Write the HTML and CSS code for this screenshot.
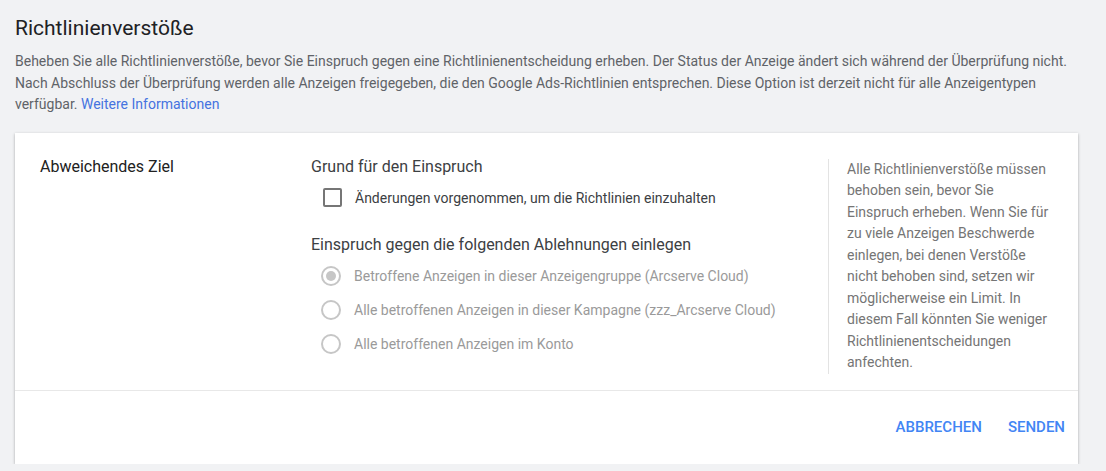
FILE: index.html
```html
<!DOCTYPE html>
<html lang="de">
<head>
<meta charset="utf-8">
<title>Richtlinienverstöße</title>
<link rel="stylesheet" href="styles.css">
</head>
<body>
<div class="page">
  <h1 class="title">Richtlinienverstöße</h1>
  <p class="intro">Beheben Sie alle Richtlinienverstöße, bevor Sie Einspruch gegen eine Richtlinienentscheidung erheben. Der Status der Anzeige ändert sich während der Überprüfung nicht. Nach Abschluss der Überprüfung werden alle Anzeigen freigegeben, die den Google Ads-Richtlinien entsprechen. Diese Option ist derzeit nicht für alle Anzeigentypen verfügbar. <a class="link" href="#">Weitere Informationen</a></p>

  <div class="card">
    <div class="card-body">
      <div class="col-label">Abweichendes Ziel</div>
      <div class="col-main">
        <div class="heading">Grund für den Einspruch</div>
        <label class="check-row">
          <span class="checkbox"></span>
          <span class="check-text">Änderungen vorgenommen, um die Richtlinien einzuhalten</span>
        </label>
        <div class="heading heading-2">Einspruch gegen die folgenden Ablehnungen einlegen</div>
        <div class="radio-row">
          <span class="radio checked"></span>
          <span class="radio-text">Betroffene Anzeigen in dieser Anzeigengruppe (Arcserve Cloud)</span>
        </div>
        <div class="radio-row">
          <span class="radio"></span>
          <span class="radio-text">Alle betroffenen Anzeigen in dieser Kampagne (zzz_Arcserve Cloud)</span>
        </div>
        <div class="radio-row">
          <span class="radio"></span>
          <span class="radio-text">Alle betroffenen Anzeigen im Konto</span>
        </div>
      </div>
      <div class="col-help">Alle Richtlinienverstöße müssen behoben sein, bevor Sie Einspruch erheben. Wenn Sie für zu viele Anzeigen Beschwerde einlegen, bei denen Verstöße nicht behoben sind, setzen wir möglicherweise ein Limit. In diesem Fall könnten Sie weniger Richtlinienentscheidungen anfechten.</div>
    </div>
    <div class="card-footer">
      <button class="btn">ABBRECHEN</button>
      <button class="btn">SENDEN</button>
    </div>
  </div>
</div>
</body>
</html>
```

FILE: styles.css
```css
html, body {
  margin: 0;
  padding: 0;
  background: #f1f2f4;
  font-family: Roboto, "Liberation Sans", Arial, sans-serif;
}

.page {
  padding: 14px 28px 0 15px;
}

.title {
  margin: 0 0 9px 0;
  font-size: 21px;
  line-height: 28px;
  font-weight: 400;
  color: #202124;
}

.intro {
  margin: 0 0 17px 0;
  font-size: 14px;
  line-height: 21.5px;
  color: #5f6368;
}

.link {
  color: #4573e0;
  text-decoration: none;
}

.card {
  background: #fff;
  box-shadow: 0 1px 3px rgba(0, 0, 0, 0.25), 0 1px 1px rgba(0, 0, 0, 0.12);
}

.card-body {
  display: flex;
  align-items: flex-start;
  padding: 20px 27px 16px 25px;
}

.col-label {
  width: 271px;
  flex: none;
  font-size: 16px;
  line-height: 28px;
  color: #212121;
}

.col-main {
  flex: 1;
}

.heading {
  font-size: 16px;
  line-height: 28px;
  color: #3c4043;
}

.heading-2 {
  margin-top: 16px;
}

.check-row {
  display: flex;
  align-items: center;
  height: 34px;
  padding-left: 12px;
}

.checkbox {
  width: 15px;
  height: 15px;
  border: 2px solid #767676;
  border-radius: 2px;
  flex: none;
  margin-right: 13px;
}

.check-text {
  font-size: 14px;
  color: #3c4043;
}

.radio-row {
  display: flex;
  align-items: center;
  height: 34px;
  padding-left: 10px;
}

.radio {
  position: relative;
  width: 16px;
  height: 16px;
  border: 2px solid #c6c6c6;
  border-radius: 50%;
  flex: none;
  margin-right: 13px;
}

.radio.checked::after {
  content: "";
  position: absolute;
  left: 3px;
  top: 3px;
  width: 10px;
  height: 10px;
  border-radius: 50%;
  background: #c6c6c6;
}

.radio-text {
  font-size: 14px;
  color: #9a9a9a;
}

.col-help {
  width: 204px;
  flex: none;
  margin-top: 6px;
  padding-left: 18px;
  border-left: 1px solid #e3e3e3;
  font-size: 14px;
  line-height: 21.5px;
  color: #757575;
}

.card-footer {
  display: flex;
  justify-content: flex-end;
  align-items: center;
  gap: 26px;
  height: 73px;
  padding-right: 13px;
  border-top: 1px solid #e8e8e8;
}

.btn {
  border: 0;
  background: none;
  padding: 0;
  font-family: Roboto, "Liberation Sans", Arial, sans-serif;
  font-size: 15px;
  font-weight: 500;
  color: #4285f4;
  cursor: pointer;
}
```
